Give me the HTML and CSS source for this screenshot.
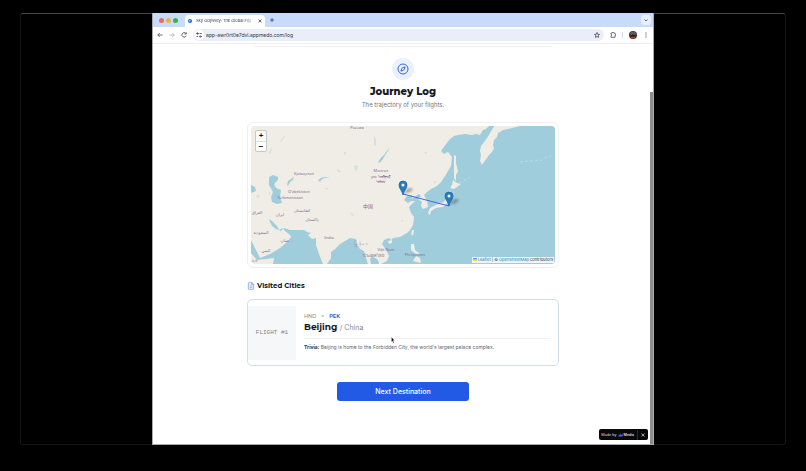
FILE: index.html
```html
<!DOCTYPE html>
<html lang="en">
<head>
<meta charset="utf-8">
<meta name="viewport" content="width=device-width, initial-scale=1">
<title>Sky Odyssey: The Global Flight</title>
<link rel="stylesheet" href="styles.css">
</head>
<body>
<div class="stage">
  <div class="browser">
    <header class="tabs">
      <span class="light red"></span><span class="light amber"></span><span class="light green"></span>
      <div class="tab">
        <svg class="favicon" viewBox="0 0 10 10"><circle cx="5" cy="5" r="5" fill="#1668c9"/><path d="M3 3l3-1 1 2-2 1 1 3-3-2z" fill="#a5d3f3"/></svg>
        <span class="tab-title">Sky Odyssey: The Global Flig</span>
        <button class="plain" aria-label="Close tab"><svg class="ico-xs" viewBox="0 0 8 8"><path d="M1 1l6 6M7 1L1 7"/></svg></button>
      </div>
      <button class="plain" aria-label="New tab"><svg class="ico-xs" viewBox="0 0 8 8"><path d="M4 0v8M0 4h8"/></svg></button>
      <button class="plain tab-menu" aria-label="Search tabs"><svg class="ico-xs" viewBox="0 0 8 8"><path d="M1 3l3 3 3-3"/></svg></button>
    </header>
    <nav class="toolbar">
      <button class="plain" aria-label="Back"><svg class="ico" viewBox="0 0 24 24"><path d="M22 12H3M11 4l-8 8 8 8"/></svg></button>
      <button class="plain faded" aria-label="Forward"><svg class="ico" viewBox="0 0 24 24"><path d="M2 12h19M13 4l8 8-8 8"/></svg></button>
      <button class="plain" aria-label="Reload"><svg class="ico" viewBox="0 0 24 24"><path d="M21 15a9 9 0 1 1-2-10l2 2M21 1v7h-7"/></svg></button>
      <div class="address">
        <span class="site"><svg class="ico" viewBox="0 0 24 24"><path d="M2 6h8M18 18h5M2 18h6M14 6h9"/><circle cx="6" cy="6" r="3"/><circle cx="17" cy="18" r="3"/></svg></span>
        <input class="url" aria-label="Address" value="app-awr0rt0e7dvl.appmedo.com/log">
        <button class="plain" aria-label="Bookmark"><svg class="ico" viewBox="0 0 24 24"><path d="M12 2l3 7 7 .7-5.300 4.700 1.600 7.100L12 18l-6.300 3.500 1.600-7.100L2 9.700 9 9z"/></svg></button>
      </div>
      <button class="plain puzzle" aria-label="Extensions"><svg class="ico" viewBox="0 0 24 24"><path d="M4 4h5a3 3 0 0 1 6 0h5v5a3 3 0 0 1 0 6v6H4v-6a3 3 0 0 0 0-6z"/></svg></button>
      <span class="rule"></span>
      <svg class="avatar" viewBox="0 0 16 16"><circle cx="8" cy="8" r="8" fill="#54251e"/><path d="M1 6a7.400 7.400 0 0 1 14 0l-3 3-4-3-4 3z" fill="#56606b"/><path d="M4 8h8v3H4z" fill="#241716"/><path d="M3 13c3-3 7-3 10 0a8 8 0 0 1-10 0" fill="#a04632"/></svg>
      <button class="plain" aria-label="Menu"><svg class="ico" viewBox="0 0 24 24"><circle cx="12" cy="4" r="1"/><circle cx="12" cy="12" r="1"/><circle cx="12" cy="20" r="1"/></svg></button>
    </nav>
    <main class="page">
      <div class="column">
        <section class="hero">
          <span class="badge"><svg viewBox="0 0 24 24"><circle cx="12" cy="12" r="10"/><path d="M16.200 7.800l-1.800 5.300a2 2 0 0 1-1.300 1.300l-5.300 1.800 1.800-5.300a2 2 0 0 1 1.300-1.300z"/></svg></span>
          <h1>Journey Log</h1>
          <p>The trajectory of your flights.</p>
        </section>
        <section class="map" aria-label="Flight map">
          <svg class="world" viewBox="251 126 304 138" preserveAspectRatio="xMidYMid slice">
            <rect x="251" y="126" width="304" height="138" fill="#efede5"/>
            <g fill="#a0cddc">
              <path d="M555 126H520L516 127 508 129 503 130 500 132 498 133 497 137 494 140 493 145 494 148 492 152 489 155 487 158 484 162 482 165 480 161 481 155 480 151 481 146 484 142 487 138 490 133 493 128 494 126H489L486 129 483 130 480 135 476 134 472 135 465 134 458 135 454 136 450 139 446 144 441 151 444 154 448 152 452 157 451 166 448 171 445 176 441 182 437 186 431 189 427 192 424 195 427 201 428 207 423 209 421 206 422 202 418 199 421 196 419 194 414 197 412 199 412 195 407 196 404 200 408 203 411 201 415 201 412 204 409 207 411 213 414 217 413 225 410 230 407 233 400 237 393 238 391 240 389 238 384 240 382 244 386 250 389 256 387 261 381 264H555Z"/>
              <path d="M379 264L378 260 372 256 370 259 371 264H368L366 258 364 251 360 249 357 244 356 239 350 238 345 241 340 244 335 249 331 252 331 258 327 264H323L319 254 316 245 316 238 312 239 308 235 311 233 307 232 304 230 290 230 284 228 281 231 276 229 272 226 270 222 269 219 272 221 277 226 279 230 283 228 285 231 290 235 291 237 287 242 280 248 270 254 260 258 257 252 251 240V253L257 260 266 259 274 258 273 264Z"/>
              <path d="M269 177l4-2 5 2 0 3-4 4 2 4 5 2-1 7 2 6-5 1-5-2-1-5 2-5-4-7z"/>
              <path d="M251 185l4 2 1 4-5 2zM390 148q-3 4-6 9-2 5-6 6 1-4 6-8 3-5 6-7M318 180q5-5 12-2-8-1-10 4zM288 181l6-4-1 3-3 2-2 4-1-1z"/>
            </g>
            <g fill="#efede5">
              <path d="M454 155l2 1 0 7 2 8-2 4 0 6-2-3 0-8zM453 180l4 3 4 1-4 3-3 2-4-1 2-3zM450 190l1 5-3 7-5 5-7 1-5 3-1 4-2-2 2-5 8-4 6-2 3-6zM412 230l2 0-1 6-2-2zM388 241l4-1 0 3-3 1zM411 244l3 0 1 6 5 4-4 0-5-4zM416 256l4 2 1 5-4-1-4-1z"/>
            </g>
            <path d="M459 183l13-7M520 162l22-2M544 158l9-3" stroke="#bcdbe3" stroke-width=".8" stroke-dasharray="3 2" fill="none"/>
            <g fill="#d6e0de"><path d="M269 153l2-5 1 2-2 4zM280 141l4-5 1 1-4 5zM256 196l3-2 1 3-3 1zM268 195l1-3 2 1zM374 135l2 4 0 7-2-1zM354 165l4 1-1 5-2-1zM337 169l4 2-1 2-3-2zM325 188l3 0-1 2zM344 152l2 0 0 3-2-1zM424 152l3 0-1 2zM434 181l2 0 0 2-2 0zM350 212l4 3-2 1zM401 220l2 0 0 2z"/></g>
            <g class="places">
              <text x="357" y="129">Россия</text><text x="304" y="175">Қазақстан</text>
              <text x="299" y="193">O'zbekiston</text><text x="290" y="199">Türkmenistan</text>
              <text x="257" y="214">العراق</text><text x="280" y="216">ایران</text><text x="302" y="212">افغانستان</text>
              <text x="312" y="221">پاکستان</text><text x="261" y="234">السعودية</text><text x="285" y="242">عمان</text><text x="266" y="252">اليمن</text>
              <text x="329" y="239">India</text><text x="381" y="172">Монгол</text><text x="381" y="178">улс ᠮᠣᠩᠭᠣᠯ</text><text x="381" y="183">ᠤᠯᠤᠰ</text>
              <text x="368" y="208" class="large">中国</text><text x="361" y="245">မြန်မာ</text><text x="386" y="251">Việt Nam</text><text x="373" y="257">ประเทศไทย</text><text x="415" y="256">Philippines</text><text x="255" y="262">ኢት</text>
            </g>
            <path d="M403 194L449 206" stroke="#4169e1" stroke-width="1"/>
            <defs>
              <filter id="soft"><feGaussianBlur stdDeviation="1"/></filter>
              <g id="pin"><path d="M0 0L5-6 10-6 8-2z" fill="#333" opacity=".35" filter="url(#soft)"/><path d="M0 1C-1-4-4-5-4-9a4 4 0 0 1 8 0C4-5 1-4 0 1Z" fill="#287bbb" stroke="#236aa4" stroke-width=".8"/><circle cy="-9" r="1.500" fill="#fff"/></g>
            </defs>
            <use href="#pin" x="403" y="194"/><use href="#pin" x="449" y="205"/>
          </svg>
          <div class="zoom"><button aria-label="Zoom in">+</button><button aria-label="Zoom out">−</button></div>
          <div class="credit"><svg viewBox="0 0 12 8"><path fill="#4c7be1" d="M0 0h12v4H0z"/><path fill="#ffd500" d="M0 4h12v4H0z"/></svg> <a href="#leaflet">Leaflet</a> | © <a href="#osm">OpenStreetMap</a> contributors</div>
        </section>
        <h2><svg viewBox="0 0 24 24"><path d="M15 2H6a2 2 0 0 0-2 2v16a2 2 0 0 0 2 2h12a2 2 0 0 0 2-2V7zM14 2v6h6M8 12h8M8 17h8M8 8h2"/></svg>Visited Cities</h2>
        <article class="card">
          <div class="flight">FLIGHT #1</div>
          <div class="details">
            <div class="route"><span>HND</span><span>&gt;</span><b>PEK</b></div>
            <h3>Beijing <small>/ China</small></h3>
            <p class="trivia"><b>Trivia:</b> Beijing is home to the Forbidden City, the world's largest palace complex.</p>
          </div>
        </article>
        <button class="next">Next Destination</button>
      </div>
      <div class="made"><span>Made by</span><svg class="logo" viewBox="0 0 12 10"><path d="M0 9l3-6 2 3 2-6 1 6 4-5-1 8z" fill="#5264ff"/></svg><b>Medo</b><button class="plain" aria-label="Dismiss"><svg class="ico-xs" viewBox="0 0 8 8"><path d="M1 1l6 6M7 1L1 7"/></svg></button></div>
      <span class="scroll"></span>
      <svg class="pointer" viewBox="0 0 8 12"><path d="M1 0l6 7-3 0 2 4-2 1-1-4-2 2z" fill="#111" stroke="#fff" stroke-width=".5"/></svg>
    </main>
  </div>
</div>
</body>
</html>
```
FILE: styles.css
```css
* { box-sizing: border-box; }
body {
  margin: 0;
  min-height: 100vh;
  padding: 13px 20px 26px;
  display: flex;
  background: #000;
  color: #15181e;
  font: 6px/8px Inter, "Noto Sans", sans-serif;
}
h1, h2, h3, p { margin: 0; }
button { font: inherit; cursor: pointer; }
svg { display: block; }
.stage {
  flex: 1;
  display: grid;
  grid-template-columns: 131fr 502fr 131fr;
  border: 1px solid #151515;
  border-top-color: #454545;
  border-radius: 3px;
}
.browser {
  grid-column: 2;
  display: flex;
  flex-direction: column;
  min-width: 0;
  background: #fff;
  margin: -1px 0;
  border: 1px solid #aaa;
  border-top: 0;
}
.plain {
  display: flex;
  padding: 0;
  border: 0;
  background: none;
  color: inherit;
}
.ico, .ico-xs {
  width: 6px;
  height: 6px;
  fill: none;
  stroke: currentColor;
  stroke-width: 3;
}
.ico-xs { width: 4px; height: 4px; stroke-width: 1.5; }
.tabs {
  display: flex;
  align-items: center;
  height: 14px;
  padding: 0 2px 0 6px;
  gap: 2px;
  background: #c9dbfa;
  color: #333b48;
}
.light { width: 5px; height: 5px; border-radius: 50%; }
.red { background: #ec6a5e; }
.amber { background: #f0b04a; }
.green { background: #37b54c; }
.tab {
  display: flex;
  align-items: center;
  gap: 4px;
  width: 80px;
  height: 12px;
  margin: 2px 3px 0 5px;
  padding: 0 3px;
  border-radius: 4px 4px 0 0;
  background: #fff;
}
.tab .plain { flex: none; }
.favicon { width: 4px; height: 4px; flex: none; }
.tab-title {
  flex: 1;
  white-space: nowrap;
  font: 4px/8px Inter, sans-serif;
  mask-image: linear-gradient(90deg, #000 85%, transparent);
}
.tab-menu {
  width: 10px;
  height: 10px;
  margin-left: auto;
  border-radius: 3px;
  background: #e6effd;
  align-items: center;
  justify-content: center;
}
.toolbar {
  display: flex;
  align-items: center;
  gap: 6px;
  height: 17px;
  padding: 0 4px;
  border-bottom: 1px solid #eee;
  color: #3c4046;
}
.faded { opacity: .45; }
.address {
  flex: 1;
  display: flex;
  align-items: center;
  gap: 2px;
  height: 12px;
  padding: 0 4px 0 1px;
  border-radius: 6px;
  background: #e9eef8;
}
.site { padding: 2px; border-radius: 50%; background: #fff; }
.url {
  flex: 1;
  min-width: 0;
  padding: 0;
  border: 0;
  background: none;
  color: #30343a;
  font: 5px/8px Inter, sans-serif;
}
.rule { width: 1px; height: 6px; background: #d3dcea; }
.avatar { width: 8px; height: 8px; }
.page {
  position: relative;
  flex: 1;
  padding: 2px 20% 32px;
}
.column { display: flex; flex-direction: column; }
.hero {
  display: flex;
  flex-direction: column;
  align-items: center;
  padding-top: 11px;
  border-top: 1px solid #f2f3f5;
}
.badge {
  display: flex;
  padding: 5px;
  border-radius: 50%;
  background: #eaf1fe;
}
.badge svg { width: 12px; height: 12px; fill: none; stroke: #3465d8; stroke-width: 2; }
h1 { margin-top: 4px; font: 800 10px/15px Montserrat, Inter, sans-serif; }
.hero p { margin-top: 1px; line-height: 10px; color: #71757d; }
.map {
  position: relative;
  width: calc(100% + 12px);
  margin: 12px -6px 0;
  padding: 3px;
  border: 1px solid #edf1f5;
  border-radius: 6px;
}
.world { width: 100%; height: auto; border-radius: 4px; }
.places { font: 4px "Noto Sans", "DejaVu Sans", sans-serif; fill: #866b91; text-anchor: middle; }
.large { font: 5px "Noto Sans CJK SC", sans-serif; }
.zoom {
  position: absolute;
  top: 7px;
  left: 7px;
  display: flex;
  flex-direction: column;
  border: 1px solid #c8c8c4;
  border-radius: 2px;
  background: #fff;
}
.zoom button {
  width: 10px;
  height: 10px;
  padding: 0;
  border: 0;
  background: none;
  color: #111;
  font: 700 8px/10px "Liberation Sans", sans-serif;
}
.zoom button + button { border-top: 1px solid #ddd; }
.credit {
  position: absolute;
  right: 4px;
  bottom: 4px;
  padding: 0 1px;
  background: rgba(255, 255, 255, .8);
  color: #333;
  font: 4px/6px Inter, sans-serif;
}
.credit svg { display: inline-block; width: 4px; height: 3px; }
.credit a { color: #1480b3; text-decoration: none; }
h2 {
  display: flex;
  align-items: center;
  gap: 2px;
  margin: 13px -6px 8px;
  font: 700 7px/10px Montserrat, Inter, sans-serif;
}
h2 svg { width: 8px; height: 8px; fill: none; stroke: #5d86df; stroke-width: 2; }
.card {
  display: flex;
  width: calc(100% + 12px);
  margin: 0 -6px;
  padding: 6px 0 5px;
  border: 1px solid #d3deea;
  border-radius: 5px;
}
.flight {
  flex: 0 0 48px;
  display: flex;
  align-items: center;
  justify-content: center;
  background: #f6f7f9;
  color: #7c828c;
  font: 6px/8px "Liberation Mono", monospace;
}
.details { flex: 1; padding: 6px 8px 9px; }
.route { display: flex; gap: 5px; color: #888c94; font: 500 5px/8px Montserrat, Inter, sans-serif; }
.route b { color: #3e66d4; }
h3 { font: 700 9px/14px Montserrat, Inter, sans-serif; }
h3 small { color: #858990; font: 400 7px/14px Inter, sans-serif; }
.trivia {
  margin-top: 3px;
  padding-top: 4px;
  border-top: 1px solid #f1f2f4;
  color: #62666e;
  font-size: 5px;
}
.trivia b { color: #30343a; }
.next {
  align-self: center;
  width: 44%;
  min-width: 132px;
  margin-top: 16px;
  padding: 4px;
  border: 0;
  border-radius: 3px;
  background: #2259e5;
  color: #fff;
  font-size: 7px;
  line-height: 11px;
  font-weight: 500;
}
.made {
  position: absolute;
  right: 5px;
  bottom: 4px;
  display: flex;
  align-items: center;
  gap: 1px;
  height: 11px;
  padding: 0 3px 0 2px;
  border-radius: 2px;
  background: #08080a;
  color: #d8d8dc;
  font: 4px/8px "Liberation Sans", sans-serif;
}
.made .plain { margin-left: 2px; padding: 3px 0 3px 3px; border-left: 1px solid #2b2b2e; }
.logo { width: 5px; height: 4px; }
.scroll {
  position: absolute;
  top: 48px;
  right: 0;
  bottom: 0;
  width: 3px;
  background: #8b8b8b;
}
.pointer { position: absolute; top: 67%; left: 47.6%; margin-top: 25px; width: 4px; height: 6px; }
```
